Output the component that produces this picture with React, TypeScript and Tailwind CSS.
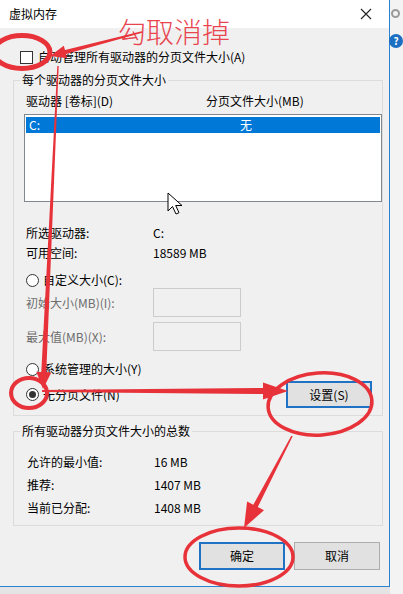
import React from 'react'

function arrowPoints(x1: number, y1: number, x2: number, y2: number, w1: number, w2: number, hl: number, hw: number) {
  const len = Math.hypot(x2 - x1, y2 - y1)
  const ux = (x2 - x1) / len
  const uy = (y2 - y1) / len
  const px = -uy
  const py = ux
  const bx = x2 - ux * hl
  const by = y2 - uy * hl
  const pts = [
    [x1 + (px * w1) / 2, y1 + (py * w1) / 2],
    [bx + (px * w2) / 2, by + (py * w2) / 2],
    [bx + (px * hw) / 2, by + (py * hw) / 2],
    [x2, y2],
    [bx - (px * hw) / 2, by - (py * hw) / 2],
    [bx - (px * w2) / 2, by - (py * w2) / 2],
    [x1 - (px * w1) / 2, y1 - (py * w1) / 2],
  ]
  return pts.map(p => p[0].toFixed(1) + ',' + p[1].toFixed(1)).join(' ')
}

function Radio({ checked, label, disabled }: { checked?: boolean; label: string; disabled?: boolean }) {
  return (
    <div className="flex items-center h-[16px]">
      <div className="w-[13px] h-[13px] rounded-full border border-[#333333] bg-white flex items-center justify-center">
        {checked && <div className="w-[7px] h-[7px] rounded-full bg-[#333333]" />}
      </div>
      <span className={'ml-[4px] ' + (disabled ? 'text-[#6d6d6d]' : 'text-black')}>{label}</span>
    </div>
  )
}

function Field({ label, value }: { label: string; value: string }) {
  return (
    <div className="flex h-[16px] items-center">
      <span className="w-[127px]">{label}</span>
      <span>{value}</span>
    </div>
  )
}

function WinButton({ label, focused, className = '' }: { label: string; focused?: boolean; className?: string }) {
  return (
    <div
      className={
        'w-[86px] flex items-center justify-center bg-[#e1e1e1] ' +
        (focused ? 'border-2 border-[#1f72c4] ' : 'border border-[#adadad] ') +
        className
      }
    >
      {label}
    </div>
  )
}

export default function App() {
  const red = '#e8323a'
  return (
    <div className="relative w-[403px] h-[594px] overflow-hidden bg-[#e4e4e4] text-[12px] leading-[16px] text-black font-['Noto_Sans_CJK_SC','Noto_Sans',sans-serif]">
      <div className="flex">
        {/* dialog */}
        <div className="w-[396px] h-[587px] border-r border-b border-[#2a82d2] bg-[#f0f0f0] flex flex-col">
          <div className="h-[28px] bg-white flex items-center justify-between pl-[9px] pr-[17px]">
            <span>虚拟内存</span>
            <svg width="12" height="12" viewBox="0 0 12 12">
              <path d="M1 1 L11 11 M11 1 L1 11" stroke="#222" strokeWidth="1.1" />
            </svg>
          </div>

          <div className="flex items-center h-[16px] mt-[21px] ml-[20px]">
            <div className="w-[13px] h-[13px] border border-[#333333] bg-white" />
            <span className="ml-[5px]">自动管理所有驱动器的分页文件大小(A)</span>
          </div>

          {/* group 1 */}
          <div className="mt-[15px] ml-[13px] w-[370px] border border-[#dcdcdc] flex flex-col pb-[7px]">
            <div className="-mt-[9px] ml-[6px] px-[2px] w-fit bg-[#f0f0f0]">每个驱动器的分页文件大小</div>
            <div className="flex mt-[5px] pl-[12px]">
              <span className="w-[180px]">驱动器 [卷标](D)</span>
              <span>分页文件大小(MB)</span>
            </div>
            <div className="mt-[5px] ml-[10px] w-[358px] h-[88px] border border-[#828790] bg-white pt-[2px]">
              <div className="ml-[1px] mr-[1px] h-[16px] bg-[#0078d7] text-white flex items-center">
                <span className="w-[177px] pl-[3px]">C:</span>
                <span className="w-[86px] text-center">无</span>
              </div>
            </div>
            <div className="mt-[23px] pl-[12px] flex flex-col gap-[4px]">
              <Field label="所选驱动器:" value="C:" />
              <Field label="可用空间:" value="18589 MB" />
            </div>
            <div className="mt-[11px] pl-[12px]">
              <Radio label="自定义大小(C):" />
            </div>
            <div className="pl-[12px] flex items-center">
              <span className="w-[127px] text-[#6d6d6d]">初始大小(MB)(I):</span>
              <div className="w-[88px] h-[29px] border border-[#cccccc] bg-[#f0f0f0]" />
            </div>
            <div className="mt-[5px] pl-[12px] flex items-center">
              <span className="w-[127px] text-[#6d6d6d]">最大值(MB)(X):</span>
              <div className="w-[88px] h-[29px] border border-[#cccccc] bg-[#f0f0f0]" />
            </div>
            <div className="mt-[10px] pl-[12px]">
              <Radio label="系统管理的大小(Y)" />
            </div>
            <div className="mt-[4px] pl-[12px] pr-[10px] flex items-center justify-between">
              <Radio checked label="无分页文件(N)" />
              <WinButton label="设置(S)" focused className="h-[27px]" />
            </div>
          </div>

          {/* group 2 */}
          <div className="mt-[15px] ml-[13px] w-[370px] border border-[#dcdcdc] flex flex-col pb-[9px]">
            <div className="-mt-[9px] ml-[6px] px-[2px] w-fit bg-[#f0f0f0]">所有驱动器分页文件大小的总数</div>
            <div className="mt-[15px] pl-[13px] flex flex-col gap-[7px]">
              <Field label="允许的最小值:" value="16 MB" />
              <Field label="推荐:" value="1407 MB" />
              <Field label="当前已分配:" value="1408 MB" />
            </div>
          </div>

          <div className="mt-[16px] flex justify-end gap-[9px] pr-[9px]">
            <WinButton label="确定" focused className="h-[28px]" />
            <WinButton label="取消" className="h-[28px]" />
          </div>
        </div>

        {/* parent window edge on the right */}
        <div className="flex-1 h-[594px] bg-[#f3f3f3] flex flex-col items-start">
          <div className="mt-[9px] ml-[1px] w-[9px] h-[9px] rounded-full border-2 border-[#9a9a9a]" />
          <div className="mt-[16px] ml-[-1px] w-[14px] h-[14px] rounded-full bg-[#1d6fc2] text-white text-[10px] leading-[14px] font-bold text-center">?</div>
        </div>
      </div>

      {/* parent window buttons below */}
      <div className="h-[7px] flex items-start overflow-hidden">
        <div className="w-[23px] h-[7px] border-r border-[#bdbdbd]" />
        <div className="ml-[10px] w-[86px] h-[18px] mt-[1px] border border-[#adadad] bg-[#e1e1e1] text-center leading-[18px]">取消</div>
        <div className="ml-[9px] w-[86px] h-[18px] mt-[1px] border border-[#bfbfbf] bg-[#cccccc] text-center leading-[18px] text-[#8a8a8a]">应用(A)</div>
        <div className="ml-[7px] w-[1px] h-[7px] bg-[#bdbdbd]" />
      </div>

      {/* annotations */}
      <div className="absolute left-[118px] top-[15px] text-[28px] leading-[32px] font-light text-[#e8454f]">勾取消掉</div>

      <svg className="absolute inset-0 pointer-events-none" width="403" height="594" viewBox="0 0 403 594">
        <ellipse cx="22" cy="52" rx="28" ry="16.5" fill="none" stroke={red} strokeWidth="5" />
        <ellipse cx="29" cy="393" rx="18" ry="15" fill="none" stroke={red} strokeWidth="4" />
        <ellipse cx="320" cy="404" rx="52" ry="31" fill="none" stroke={red} strokeWidth="3.5" transform="rotate(-4 320 404)" />
        <ellipse cx="239" cy="557" rx="54" ry="29" fill="none" stroke={red} strokeWidth="3.5" />

        <polygon points={arrowPoints(142, 32, 50, 56, 1.5, 4, 16, 13)} fill={red} />
        <polygon points={arrowPoints(58, 66, 43, 389, 1.5, 5, 17, 15)} fill={red} />
        <polygon points={arrowPoints(42, 391, 288, 391, 2, 6, 25, 17)} fill={red} />
        <polygon points={arrowPoints(292, 436, 244, 528, 1.5, 5, 25, 19)} fill={red} />

        <path
          d="M168 193 L168 211 L172.5 206.5 L176 214 L179 212.7 L175.7 205.5 L182 205.5 Z"
          fill="#ffffff"
          stroke="#000000"
          strokeWidth="1"
          strokeLinejoin="round"
        />
      </svg>
    </div>
  )
}
